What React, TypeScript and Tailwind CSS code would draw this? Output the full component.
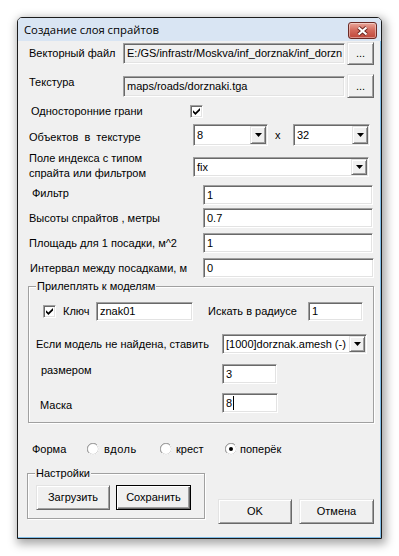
import React from "react";

const sunken =
  "border border-t-[#a0a0a0] border-l-[#a0a0a0] border-r-white border-b-white shadow-[inset_1px_1px_0_#696969,inset_-1px_-1px_0_#e3e3e3]";
const raised =
  "border border-t-[#e3e3e3] border-l-[#e3e3e3] border-r-[#696969] border-b-[#696969] shadow-[inset_1px_1px_0_#fff,inset_-1px_-1px_0_#a0a0a0] bg-[#f0f0f0]";

function Field({ cls, text, bg = "bg-white", caret = false }: { cls: string; text: string; bg?: string; caret?: boolean }) {
  return (
    <div className={`${sunken} ${bg} ${cls} flex items-center pl-[3px] overflow-hidden whitespace-nowrap shrink-0`}>
      <span>{text}</span>
      {caret && <span className="w-px h-[14px] bg-black ml-[1px]" />}
    </div>
  );
}

function Combo({ cls, text }: { cls: string; text: string }) {
  return (
    <div className={`${sunken} bg-white ${cls} flex items-stretch p-[1px] shrink-0`}>
      <div className="flex-1 flex items-center pl-[2px] overflow-hidden whitespace-nowrap">{text}</div>
      <div className={`${raised} w-[16px] flex items-center justify-center`}>
        <svg width="7" height="4" viewBox="0 0 7 4">
          <path d="M0 0H7L3.5 4Z" fill="#000" />
        </svg>
      </div>
    </div>
  );
}

function Btn({ cls, children, def = false }: { cls: string; children: React.ReactNode; def?: boolean }) {
  const style = def
    ? "border border-black shadow-[inset_1px_1px_0_#fff,inset_-1px_-1px_0_#696969,inset_-2px_-2px_0_#a0a0a0] bg-[#f0f0f0]"
    : raised;
  return <div className={`${style} ${cls} flex items-center justify-center shrink-0`}>{children}</div>;
}

function Check() {
  return (
    <div className={`${sunken} bg-white w-[13px] h-[13px] flex items-center justify-center shrink-0`}>
      <svg width="7" height="7" viewBox="0 0 7 7">
        <path d="M0 2.2L2.4 4.6L7 0V2.4L2.4 7L0 4.6Z" fill="#000" />
      </svg>
    </div>
  );
}

function Radio({ on = false }: { on?: boolean }) {
  return (
    <svg width="12" height="12" viewBox="0 0 12 12" className="shrink-0">
      <circle cx="6" cy="6" r="5.5" fill="#fff" stroke="#b8b8b8" />
      <path d="M1.9 10.1A5 5 0 0 1 10.1 1.9" fill="none" stroke="#a0a0a0" strokeWidth="1" />
      <path d="M10.1 1.9A5 5 0 0 1 1.9 10.1" fill="none" stroke="#f4f4f4" strokeWidth="1" />
      {on && <circle cx="6" cy="6" r="2" fill="#000" />}
    </svg>
  );
}

function Group({ title, cls, titleCls, children }: { title: string; cls: string; titleCls: string; children: React.ReactNode }) {
  return (
    <div className={`relative border border-[#a0a0a0] shadow-[inset_1px_1px_0_#fff,1px_1px_0_#fff] flex flex-col shrink-0 ${cls}`}>
      <span className={`absolute top-[-7px] bg-[#f0f0f0] px-[1px] leading-[13px] ${titleCls}`}>{title}</span>
      {children}
    </div>
  );
}

export default function App() {
  return (
    <div className="w-[399px] h-[556px] bg-white pt-[17px] pl-[17px] font-['Liberation_Sans',Arial,sans-serif] text-[11px] text-black">
      <div className="w-[365px] h-[522px] border border-[#1c1c1c] rounded-t-[5px] overflow-hidden flex flex-col shadow-[2px_3px_10px_2px_rgba(0,0,0,0.35)]">
        {/* title bar */}
        <div className="h-[23px] bg-[#d9e5f3] flex items-start shrink-0">
          <span className="pl-[6px] mt-[4px] text-[11.3px] leading-[16px] font-['Open_Sans',sans-serif] text-black">Создание слоя спрайтов</span>
          <div className="ml-auto mr-[4px] mt-[4px] w-[29px] h-[17px] rounded-[3px] border border-[#6b2a25] bg-gradient-to-b from-[#e9a79b] via-[#d2685b] to-[#c0473a] flex items-center justify-center shadow-[inset_0_0_0_1px_rgba(255,255,255,0.4)]">
            <svg width="13" height="10" viewBox="0 0 13 10">
              <path d="M2.5 1.5L10.5 8.5M10.5 1.5L2.5 8.5" stroke="#6a2620" strokeWidth="4" />
              <path d="M2.5 1.5L10.5 8.5M10.5 1.5L2.5 8.5" stroke="#fff" strokeWidth="2.2" />
            </svg>
          </div>
        </div>

        {/* content */}
        <div className="h-[497px] bg-[#f0f0f0] border-r border-b border-[#7fbde8] flex flex-col">
          {/* row 1 */}
          <div className="mt-[1px] h-[23px] flex items-center">
            <span className="ml-[11px] w-[94px] shrink-0">Векторный файл</span>
            <Field cls="w-[222px] h-[21px]" bg="bg-[#f0f0f0]" text="E:/GS/infrastr/Moskva/inf_dorznak/inf_dorzn" />
            <Btn cls="ml-[2px] w-[27px] h-[23px]">...</Btn>
          </div>
          {/* row 2 */}
          <div className="mt-[9px] h-[24px] flex items-center">
            <span className="ml-[11px] w-[94px] mb-[7px] shrink-0">Текстура</span>
            <Field cls="w-[222px] h-[21px]" bg="bg-[#f0f0f0]" text="maps/roads/dorznaki.tga" />
            <Btn cls="ml-[2px] w-[27px] h-[24px]">...</Btn>
          </div>
          {/* row 3 */}
          <div className="mt-[6px] h-[14px] flex items-center">
            <span className="ml-[13px] w-[159px] shrink-0">Односторонние грани</span>
            <Check />
          </div>
          {/* row 4 */}
          <div className="mt-[6px] h-[22px] flex items-center">
            <span className="ml-[11px] w-[164px] mt-[4px] shrink-0">Объектов&nbsp; в&nbsp; текстуре</span>
            <Combo cls="w-[75px] h-[22px]" text="8" />
            <span className="ml-[7px] w-[18px] shrink-0">x</span>
            <Combo cls="w-[77px] h-[22px]" text="32" />
          </div>
          {/* row 5 */}
          <div className="mt-[5px] h-[27px] flex items-start">
            <span className="ml-[11px] w-[164px] leading-[15px] shrink-0">
              Поле индекса с типом
              <br />
              спрайта или фильтром
            </span>
            <Combo cls="mt-[6px] w-[176px] h-[20px]" text="fix" />
          </div>
          {/* row 6 */}
          <div className="mt-[7px] h-[20px] flex items-center">
            <span className="ml-[14px] w-[171px] mb-[4px] shrink-0">Фильтр</span>
            <Field cls="w-[170px] h-[20px]" text="1" />
          </div>
          {/* row 7 */}
          <div className="mt-[3px] h-[20px] flex items-center">
            <span className="ml-[11px] w-[174px] shrink-0">Высоты спрайтов , метры</span>
            <Field cls="w-[170px] h-[20px]" text="0.7" />
          </div>
          {/* row 8 */}
          <div className="mt-[5px] h-[20px] flex items-center">
            <span className="ml-[11px] w-[174px] shrink-0">Площадь для 1 посадки, м^2</span>
            <Field cls="w-[170px] h-[20px]" text="1" />
          </div>
          {/* row 9 */}
          <div className="mt-[5px] h-[20px] flex items-center">
            <span className="ml-[12px] w-[173px] shrink-0">Интервал между посадками, м</span>
            <Field cls="w-[171px] h-[20px]" text="0" />
          </div>

          {/* group 1 */}
          <Group title="Прилеплять к моделям" cls="mt-[8px] ml-[10px] w-[346px] h-[137px]" titleCls="left-[7px]">
            <div className="mt-[15px] h-[19px] flex items-center">
              <div className="ml-[14px]">
                <Check />
              </div>
              <span className="ml-[7px] w-[33px] shrink-0">Ключ</span>
              <Field cls="w-[97px] h-[19px]" text="znak01" />
              <span className="ml-[15px] w-[100px] shrink-0">Искать в радиусе</span>
              <Field cls="w-[55px] h-[19px]" text="1" />
            </div>
            <div className="mt-[13px] h-[20px] flex items-center">
              <span className="ml-[7px] w-[186px] shrink-0">Если модель не найдена, ставить</span>
              <Combo cls="w-[145px] h-[20px]" text="[1000]dorznak.amesh (-)" />
            </div>
            <div className="mt-[10px] h-[20px] flex items-center">
              <span className="ml-[12px] w-[181px] mb-[8px] shrink-0">размером</span>
              <Field cls="w-[55px] h-[20px]" text="3" />
            </div>
            <div className="mt-[9px] h-[20px] flex items-center">
              <span className="ml-[11px] w-[182px] mt-[4px] shrink-0">Маска</span>
              <Field cls="w-[56px] h-[20px]" text="8" caret />
            </div>
          </Group>

          {/* form row */}
          <div className="mt-[19px] h-[14px] flex items-center">
            <span className="ml-[14px] w-[55px] shrink-0">Форма</span>
            <div className="w-[73px] flex items-center shrink-0">
              <Radio />
              <span className="ml-[5px] tracking-[0.5px]">вдоль</span>
            </div>
            <div className="w-[65px] flex items-center shrink-0">
              <Radio />
              <span className="ml-[4px]">крест</span>
            </div>
            <div className="flex items-center shrink-0">
              <Radio on />
              <span className="ml-[3px]">поперёк</span>
            </div>
          </div>

          {/* bottom row */}
          <div className="mt-[17px] flex items-start">
            <Group title="Настройки" cls="ml-[9px] w-[178px] h-[46px]" titleCls="left-[7px]">
              <div className="mt-[11px] ml-[8px] flex">
                <Btn cls="w-[74px] h-[25px]">Загрузить</Btn>
                <Btn def cls="ml-[6px] w-[75px] h-[25px]">
                  Сохранить
                </Btn>
              </div>
            </Group>
            <Btn cls="ml-[13px] mt-[26px] w-[74px] h-[25px]">OK</Btn>
            <Btn cls="ml-[7px] mt-[26px] w-[75px] h-[25px]">Отмена</Btn>
          </div>
        </div>
      </div>
    </div>
  );
}
